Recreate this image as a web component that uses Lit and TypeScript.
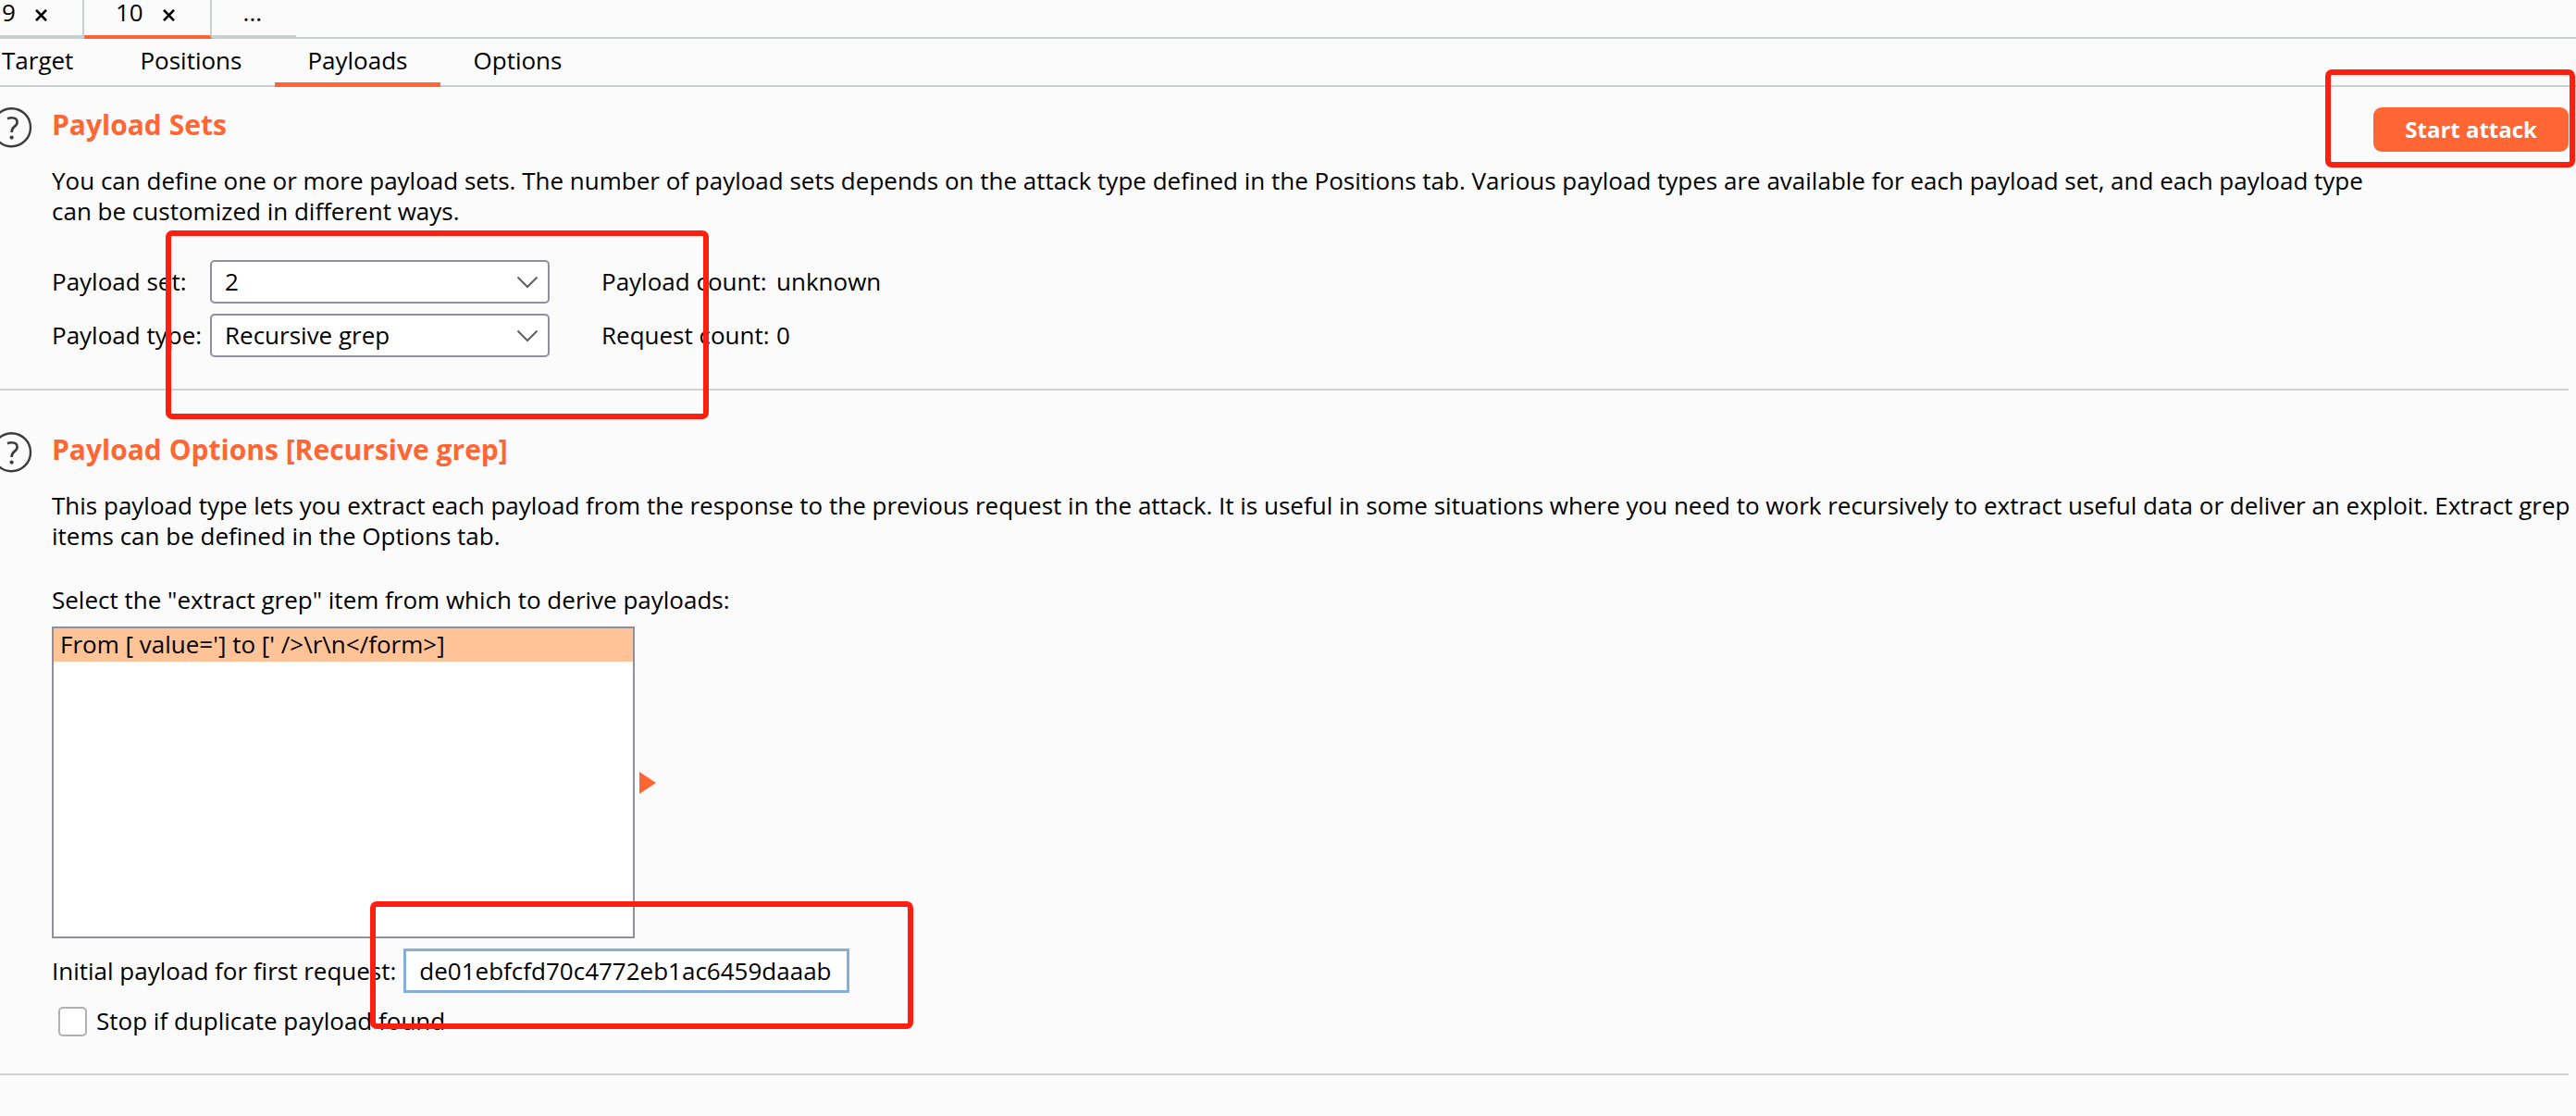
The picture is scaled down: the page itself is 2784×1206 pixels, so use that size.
import { LitElement, html, css } from "lit";
import { customElement, property, state } from "lit/decorators.js";
import { classMap } from "lit/directives/class-map.js";

@customElement("help-icon")
class HelpIcon extends LitElement {
  static styles = css`
    :host { display: block; height: 44px; }
    .icon { display: block; }
  `;

  render() {
    return html`
      <svg class="icon" width="35" height="44" viewBox="9 0 35 44" fill="none" stroke="#3c3c3c" role="img" aria-label="Help">
        <circle cx="21.500" cy="21.700" r="20.500" stroke-width="2.400" />
        <path d="M17 12.200c1.600-.7 3-1 4.600-1 3.600 0 6 1.800 6 4.700 0 2.400-1.300 3.700-3.300 5.200-2 1.500-2.700 2.600-2.700 6" stroke-width="2.600" />
        <circle cx="21.600" cy="32.600" r="2.100" fill="#3c3c3c" stroke="none" />
      </svg>
    `;
  }
}

@customElement("payload-select")
class PayloadSelect extends LitElement {
  @property() label = "";
  @property({ attribute: false }) options: string[] = [];

  static styles = css`
    :host { display: contents; }
    .label { align-self: center; }
    .box { display: grid; align-items: center; }
    .field {
      grid-area: 1 / 1;
      box-sizing: border-box;
      width: 100%;
      height: 47px;
      padding: 0 48px 0 14px;
      border: 2px solid #8f8f9f;
      border-radius: 5px;
      background: #fff;
      color: #000;
      font: inherit;
      appearance: none;
    }
    .chevron { grid-area: 1 / 1; justify-self: end; margin-right: 12px; pointer-events: none; }
  `;

  render() {
    return html`
      <label class="label" for="field">${this.label}</label>
      <div class="box">
        <select class="field" id="field">
          ${this.options.map((o) => html`<option>${o}</option>`)}
        </select>
        <svg class="chevron" width="24" height="14" viewBox="0 0 24 14" fill="none" stroke="#606060" stroke-width="2">
          <path d="M1.500 1.500 12 12 22.500 1.500" />
        </svg>
      </div>
    `;
  }
}

@customElement("app-root")
class AppRoot extends LitElement {
  @state() private section = "Payloads";

  static styles = css`
    :host {
      display: block;
      position: relative;
      min-height: 100vh;
      overflow: hidden;
      background: #fbfbfb;
      color: #000;
      font: 26px/33px "Open Sans", "Noto Sans", sans-serif;
    }
    .attacks { display: flex; height: 42px; box-sizing: border-box; border-bottom: 2px solid #c8cfcd; }
    .attack {
      display: flex;
      align-items: center;
      gap: 20px;
      box-sizing: border-box;
      height: 42px;
      padding: 0 37px 12px 34px;
      border: 0;
      border-right: 2px solid #c8cfcd;
      border-bottom: 4px solid #c8cfcd;
      background: none;
      color: inherit;
      font: inherit;
    }
    .attack.first { padding-left: 2px; }
    .attack.active { border-bottom-color: #ff6633; }
    .attack.more { border-right: 0; }
    .close { margin-top: 6px; }
    .tabs { display: flex; height: 52px; box-sizing: border-box; border-bottom: 2px solid #c8cfcd; }
    .tab {
      box-sizing: border-box;
      height: 52px;
      padding: 0 36px;
      border: 0;
      border-bottom: 5px solid transparent;
      background: none;
      color: inherit;
      font: inherit;
    }
    .tab.first { padding-left: 2px; }
    .tab.active { padding: 0 35px; border-bottom-color: #ff6633; }
    .panel {
      display: grid;
      grid-template-columns: 56px minmax(0, 1fr) auto;
      margin-right: 8px;
      padding: 22px 0 34px;
      border-bottom: 2px solid #d2d2d2;
    }
    .panel.options { padding: 45px 0 40px; grid-template-columns: 56px minmax(0, 1fr); }
    .title { margin: 0; height: 48px; color: #ff6633; font-size: 30px; line-height: 38px; font-weight: 700; }
    .start {
      height: 48px;
      padding: 0 34px 2px;
      border: 0;
      border-radius: 9px;
      background: #ff6633;
      color: #fff;
      font: inherit;
      font-size: 24px;
      font-weight: 700;
    }
    .body { grid-column: 2; padding-top: 15px; }
    .text { margin: 0 0 36px; }
    .options .text { margin-right: -8px; }
    .choices {
      display: grid;
      grid-template-columns: 171px 367px 245px auto;
      row-gap: 11px;
      justify-content: start;
      align-items: center;
    }
    .count { padding-left: 56px; white-space: nowrap; }
    .caption { margin: 0 0 12px; }
    .picker { display: flex; align-items: center; gap: 5px; }
    .list {
      box-sizing: border-box;
      width: 630px;
      height: 337px;
      margin: 0;
      padding: 0;
      border: 2px solid #8f8f9f;
      background: #fff;
      list-style: none;
    }
    .item { padding: 1px 7px 2px; background: #ffc397; white-space: pre; }
    .initial { display: flex; align-items: center; gap: 8px; margin-top: 11px; }
    .hash {
      box-sizing: border-box;
      width: 482px;
      height: 48px;
      padding: 0 14px;
      border: 3px solid #87aedb;
      background: #fff;
      color: #000;
      font: inherit;
    }
    .stop { display: flex; align-items: center; gap: 10px; margin-top: 14px; padding-left: 7px; }
    .check {
      box-sizing: border-box;
      width: 31px;
      height: 32px;
      margin: 0;
      border: 2px solid #b0b0b0;
      border-radius: 5px;
      background: #fff;
      appearance: none;
    }
    .mark { position: absolute; box-sizing: border-box; border: 6px solid #ff1f10; border-radius: 7px; pointer-events: none; }
    .mark.launch { top: 75px; right: 1px; width: 270px; height: 106px; }
    .mark.choice { top: 249px; left: 179px; width: 587px; height: 204px; }
    .mark.seed { top: 974px; left: 400px; width: 587px; height: 138px; }
  `;

  private attackTab(name: string, kind: string) {
    return html`
      <button class=${classMap({ attack: true, [kind]: true })}>
        ${name}
        <svg class="close" width="15" height="13" viewBox="0 0 15 13" fill="none" stroke="#000" stroke-width="2.600">
          <path d="M2 .8 13 12.200M13 .8 2 12.200" />
        </svg>
      </button>
    `;
  }

  render() {
    const tabs = ["Target", "Positions", "Payloads", "Options"];
    return html`
      <nav class="attacks">
        ${this.attackTab("9", "first")} ${this.attackTab("10", "active")}
        <button class="attack more">...</button>
      </nav>
      <nav class="tabs">
        ${tabs.map(
          (t, i) => html`<button
            class=${classMap({ tab: true, first: i === 0, active: t === this.section })}
            @click=${() => (this.section = t)}
          >${t}</button>`
        )}
      </nav>
      <section class="panel">
        <help-icon></help-icon>
        <h2 class="title">Payload Sets</h2>
        <button class="start">Start attack</button>
        <div class="body">
          <p class="text">
            You can define one or more payload sets. The number of payload sets depends on the attack type defined in the Positions tab. Various payload types are available for each payload set, and each payload type can be customized in different ways.
          </p>
          <div class="choices">
            <payload-select label="Payload set:" .options=${["2", "1"]}></payload-select>
            <span class="count">Payload count:</span><span>unknown</span>
            <payload-select label="Payload type:" .options=${["Recursive grep", "Simple list"]}></payload-select>
            <span class="count">Request count:</span><span>0</span>
          </div>
        </div>
      </section>
      <section class="panel options">
        <help-icon></help-icon>
        <h2 class="title">Payload Options [Recursive grep]</h2>
        <div class="body">
          <p class="text">
            This payload type lets you extract each payload from the response to the previous request in the attack. It is useful in some situations where you need to work recursively to extract useful data or deliver an exploit. Extract grep items can be defined in the Options tab.
          </p>
          <p class="caption" id="caption">Select the "extract grep" item from which to derive payloads:</p>
          <div class="picker">
            <ul class="list" role="listbox" aria-labelledby="caption">
              <li class="item" role="option" aria-selected="true">${"From [ value='] to [' />\\r\\n</form>]"}</li>
            </ul>
            <svg width="18" height="24" viewBox="0 0 18 24" fill="#ff6633"><path d="M0 0 18 12 0 24z" /></svg>
          </div>
          <div class="initial">
            <label for="hash">Initial payload for first request:</label>
            <input class="hash" id="hash" type="text" value="de01ebfcfd70c4772eb1ac6459daaab" />
          </div>
          <div class="stop">
            <input class="check" id="stop" type="checkbox" />
            <label for="stop">Stop if duplicate payload found</label>
          </div>
        </div>
      </section>
      <div class="mark launch"></div>
      <div class="mark choice"></div>
      <div class="mark seed"></div>
    `;
  }
}
